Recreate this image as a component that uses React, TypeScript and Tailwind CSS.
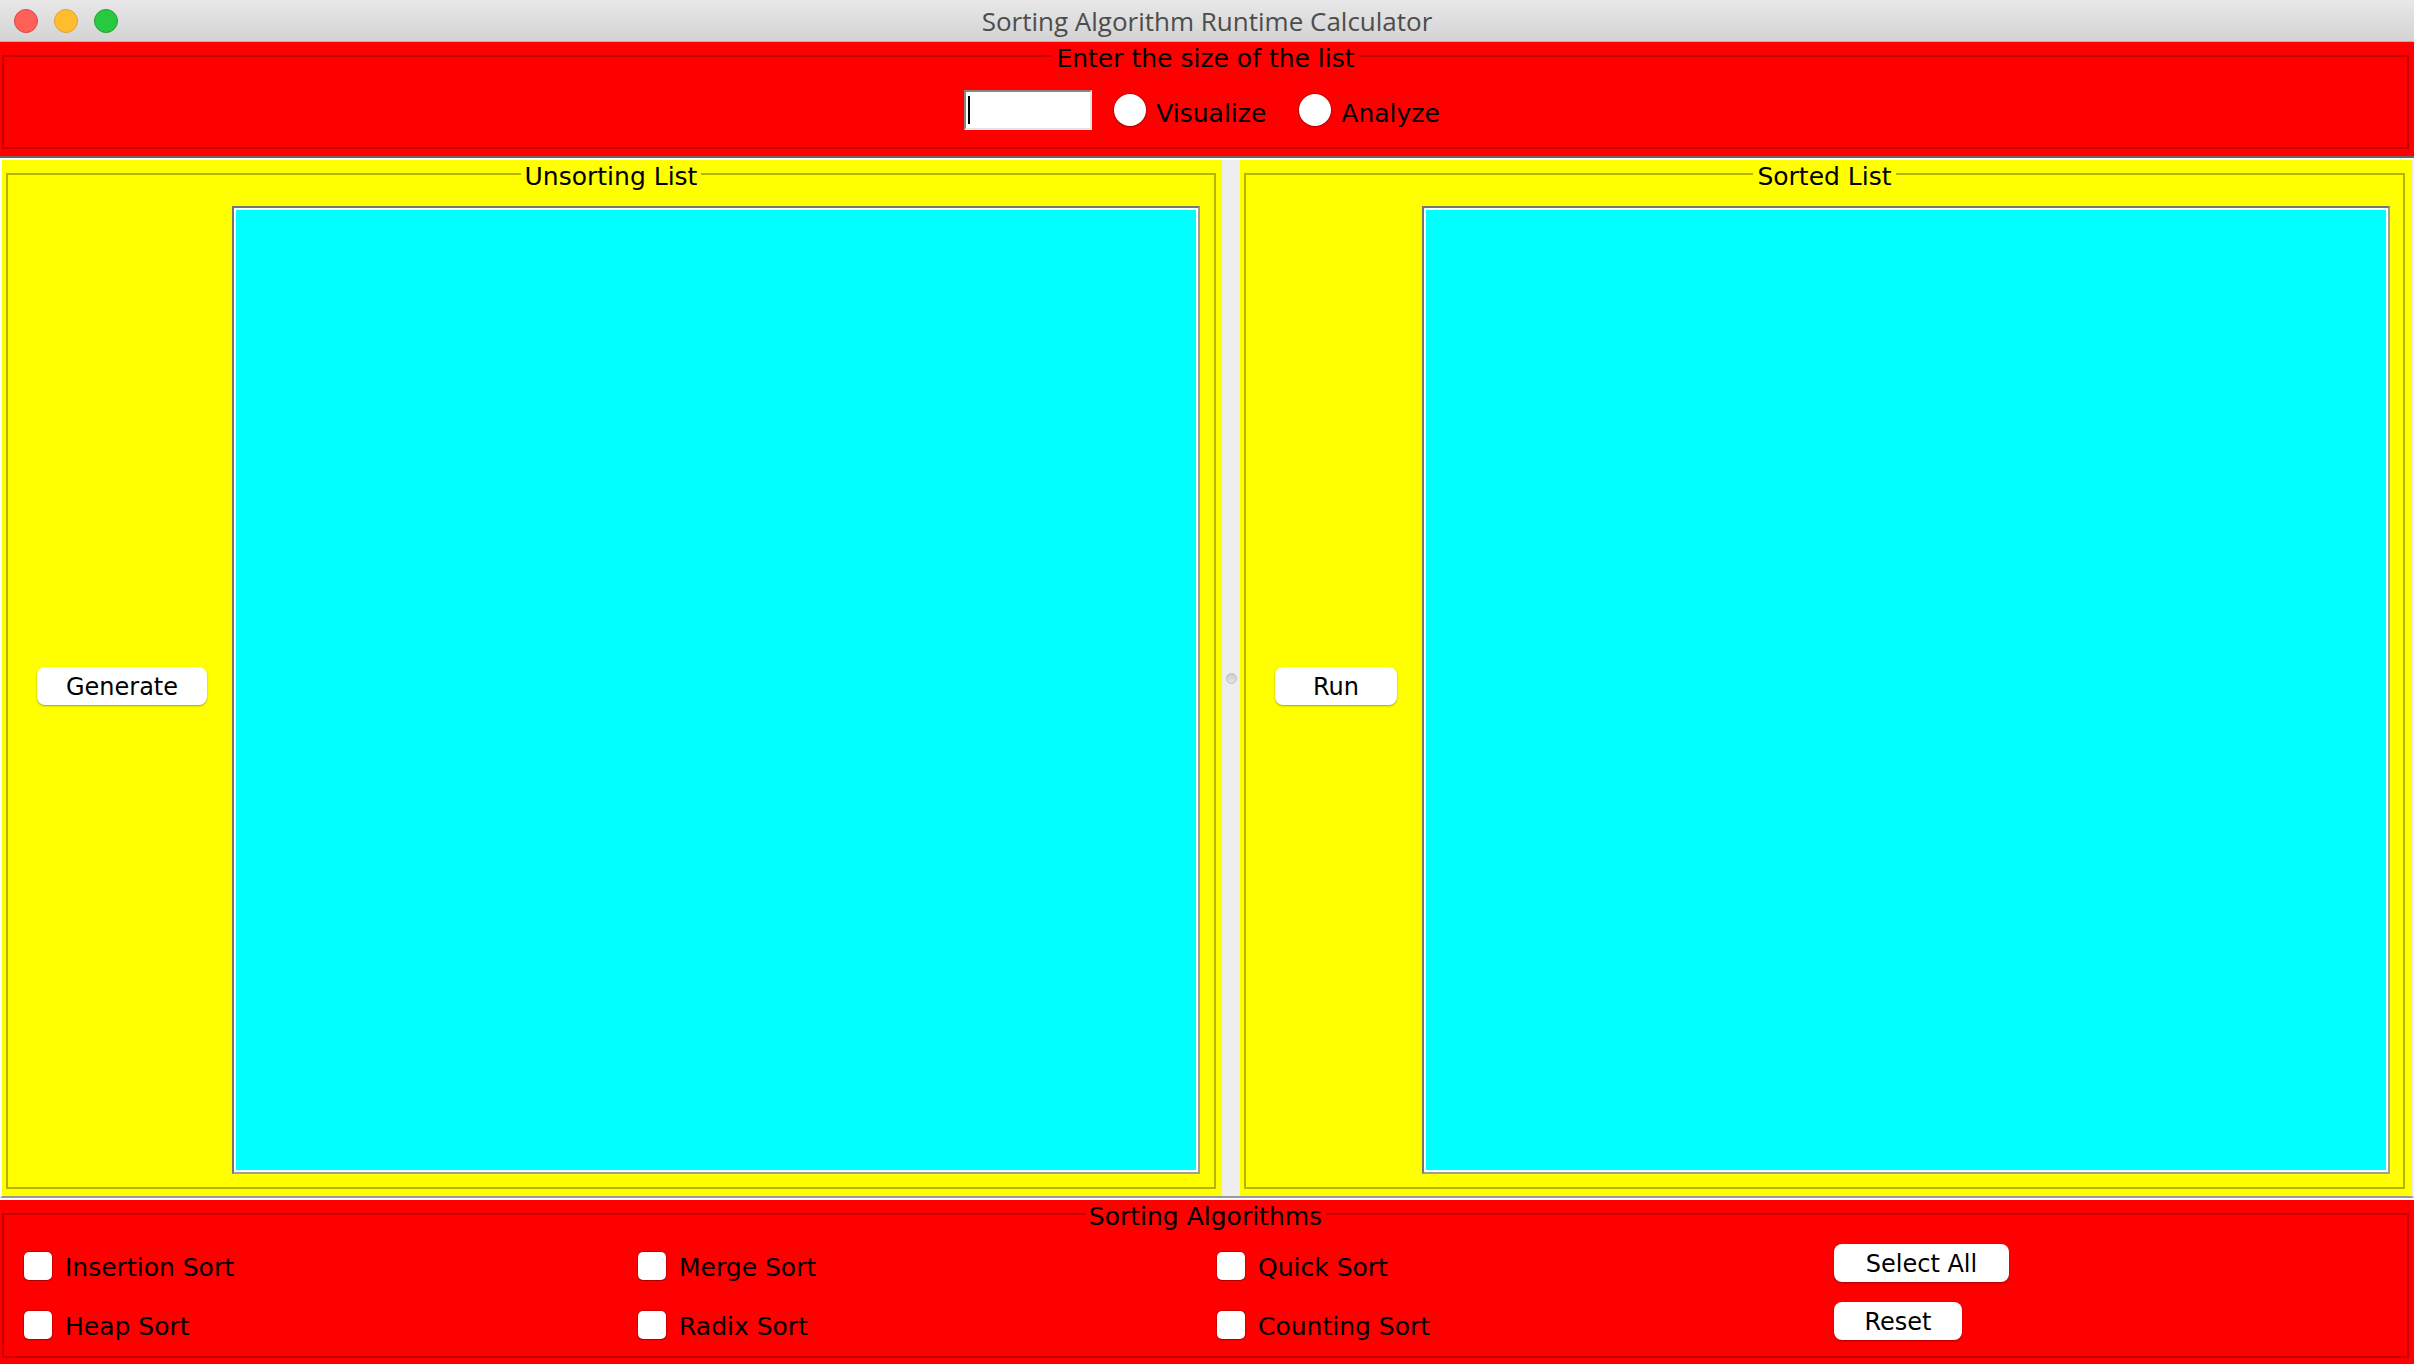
import React from 'react';

type BoxProps = {
  title: string;
  className: string;
  children: React.ReactNode;
};

// Swing-style titled border: the line runs through the title
const TitledBox: React.FC<BoxProps> = ({ title, className, children }) => (
  <fieldset className={`border-2 ${className}`}>
    <legend className="mx-auto h-[20px] px-[4px] text-[25px] leading-[25px] text-black">{title}</legend>
    {children}
  </fieldset>
);

const AquaButton: React.FC<{ label: string; className: string }> = ({ label, className }) => (
  <button className={`flex h-[38px] items-center justify-center rounded-[8px] bg-white pt-[2px] text-[24px] leading-none text-black shadow-[0_1px_2px_rgba(0,0,0,0.35)] ${className}`}>
    {label}
  </button>
);

const Check: React.FC<{ label: string }> = ({ label }) => (
  <div className="flex items-center gap-[13px]">
    <span className="h-[28px] w-[28px] rounded-[5px] bg-white shadow-[0_0_0_1px_rgba(0,0,0,0.18),0_1px_1px_rgba(0,0,0,0.2)]" />
    <span className="pt-[3px] text-[25px] leading-[29px] text-black">{label}</span>
  </div>
);

const Radio: React.FC<{ label: string }> = ({ label }) => (
  <div className="flex items-center gap-[10px]">
    <span className="h-[32px] w-[32px] rounded-full bg-white shadow-[0_0_0_1px_rgba(0,0,0,0.15),0_1px_2px_rgba(0,0,0,0.25)]" />
    <span className="pt-[6px] text-[25px] leading-[29px] text-black">{label}</span>
  </div>
);

const ListBox: React.FC = () => (
  <div className="h-[968px] w-[968px] border-2 border-[#9e9e9e] border-t-[#747474] border-l-[#747474]">
    <div className="h-full w-full border-2 border-white bg-[#00ffff]" />
  </div>
);

export default function App() {
  return (
    <div className="h-[1364px] w-[2414px] overflow-hidden bg-[#eeeeee] font-['DejaVu_Sans',sans-serif]">
      {/* Window title bar */}
      <div className="grid h-[42px] grid-cols-[1fr_auto_1fr] border-b border-[#b3b3b3] bg-linear-to-b from-[#e8e8e8] to-[#d3d3d3]">
        <div className="flex items-center gap-[16px] pl-[14px]">
          <span className="h-[24px] w-[24px] rounded-full border border-[#e2463f] bg-[#ff6159]" />
          <span className="h-[24px] w-[24px] rounded-full border border-[#e1a03a] bg-[#ffbd2e]" />
          <span className="h-[24px] w-[24px] rounded-full border border-[#1fa22e] bg-[#28c941]" />
        </div>
        <div className="font-['Open_Sans',sans-serif] text-[26px] leading-[42px] text-[#4d4d4d]">
          Sorting Algorithm Runtime Calculator
        </div>
        <div />
      </div>

      {/* Size input */}
      <div className="bg-[#ff0000] pb-[7px] pl-[2px] pr-[5px] pt-[4px]">
        <TitledBox title="Enter the size of the list" className="border-[#c40000]">
          <div className="flex h-[81px] items-center justify-center pb-[17px] pr-[7px] pt-[24px]">
            <div className="flex h-[40px] w-[128px] items-center border-2 border-[#e6e6e6] border-t-[#858585] border-l-[#858585] bg-white pl-[2px]">
              <span className="h-[28px] w-[2px] bg-black" />
            </div>
            <div className="ml-[22px] flex items-center gap-[33px]">
              <Radio label="Visualize" />
              <Radio label="Analyze" />
            </div>
          </div>
        </TitledBox>
      </div>

      {/* Split pane */}
      <div className="border-b-2 border-t-2 border-b-white border-t-[#666666]">
        <div className="flex border-2 border-[#eeeeee] border-t-white border-l-white border-b-[#9a9a9a]">
          <div className="w-[1220px] bg-[#ffff00] pb-[7px] pl-[4px] pr-[6px] pt-[4px]">
            <TitledBox title="Unsorting List" className="border-[#b5b500]">
              <div className="flex">
                <div className="flex w-[224px] items-center justify-center pl-[4px]">
                  <AquaButton label="Generate" className="w-[170px]" />
                </div>
                <div className="pb-[13px] pr-[13px] pt-[22px]">
                  <ListBox />
                </div>
              </div>
            </TitledBox>
          </div>

          <div className="flex w-[18px] items-center justify-center bg-[#eeeeee]">
            <span className="h-[11px] w-[11px] rounded-full border border-[#bcbcbc] bg-linear-to-b from-[#cdcdcd] to-[#e6e6e6]" />
          </div>

          <div className="flex-1 bg-[#ffff00] pb-[7px] pl-[4px] pr-[7px] pt-[4px]">
            <TitledBox title="Sorted List" className="border-[#b5b500]">
              <div className="flex">
                <div className="flex w-[176px] items-center justify-center pl-[4px]">
                  <AquaButton label="Run" className="w-[122px]" />
                </div>
                <div className="pb-[13px] pr-[13px] pt-[22px]">
                  <ListBox />
                </div>
              </div>
            </TitledBox>
          </div>
        </div>
      </div>

      {/* Algorithm choice */}
      <div className="bg-[#ff0000] pb-[6px] pl-[2px] pr-[5px] pt-[4px]">
        <TitledBox title="Sorting Algorithms" className="border-[#c40000]">
          <div className="grid grid-cols-[614px_579px_617px_1fr] grid-rows-[59px_59px] pb-[2px] pl-[20px] pt-[12px]">
            <Check label="Insertion Sort" />
            <Check label="Merge Sort" />
            <Check label="Quick Sort" />
            <div className="pt-[8px]">
              <AquaButton label="Select All" className="w-[175px]" />
            </div>
            <Check label="Heap Sort" />
            <Check label="Radix Sort" />
            <Check label="Counting Sort" />
            <div className="pt-[7px]">
              <AquaButton label="Reset" className="w-[128px]" />
            </div>
          </div>
        </TitledBox>
      </div>
    </div>
  );
}
